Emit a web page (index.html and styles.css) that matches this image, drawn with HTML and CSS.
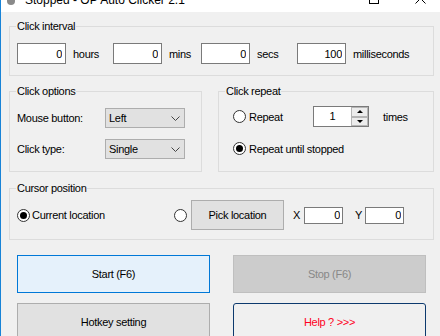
FILE: index.html
```html
<!DOCTYPE html>
<html lang="en">
  <head>
    <meta charset="UTF-8" />
    <meta name="viewport" content="width=device-width, initial-scale=1.0" />
    <title>Stopped - OP Auto Clicker 2.1</title>
    <link rel="stylesheet" href="styles.css">
  </head>
  <body>
    <div class="window">
      <div class="titlebar">
        <span class="app-icon"></span>
        <span class="title">Stopped - OP Auto Clicker 2.1</span>
        <span class="max-btn"></span>
        <svg class="close-btn" width="11" height="11" viewBox="0 0 11 11">
          <path d="M0.5 0.5 L10.5 10.5 M10.5 0.5 L0.5 10.5" stroke="#000" stroke-width="1" fill="none" />
        </svg>
      </div>

      <div class="content">
        <fieldset class="group interval">
          <legend>Click interval</legend>
          <div class="interval-row">
            <input class="num" type="text" value="0" readonly />
            <span class="unit hours">hours</span>
            <input class="num" type="text" value="0" readonly />
            <span class="unit mins">mins</span>
            <input class="num" type="text" value="0" readonly />
            <span class="unit secs">secs</span>
            <input class="num" type="text" value="100" readonly />
            <span class="unit">milliseconds</span>
          </div>
        </fieldset>

        <div class="options-row">
          <fieldset class="group options">
            <legend>Click options</legend>
            <div class="options-body">
              <div class="field-row">
                <span class="field-label">Mouse button:</span>
                <div class="select">
                  <span>Left</span>
                  <svg width="9" height="5" viewBox="0 0 9 5"><path d="M0.5 0.5 L4.5 4.5 L8.5 0.5" stroke="#444" fill="none" /></svg>
                </div>
              </div>
              <div class="field-row">
                <span class="field-label">Click type:</span>
                <div class="select">
                  <span>Single</span>
                  <svg width="9" height="5" viewBox="0 0 9 5"><path d="M0.5 0.5 L4.5 4.5 L8.5 0.5" stroke="#444" fill="none" /></svg>
                </div>
              </div>
            </div>
          </fieldset>

          <fieldset class="group repeat">
            <legend>Click repeat</legend>
            <div class="repeat-body">
              <div class="radio-row">
                <span class="radio"></span>
                <span class="radio-label repeat-label">Repeat</span>
                <div class="spinner">
                  <span class="spin-value">1</span>
                  <div class="spin-buttons">
                    <span class="spin-btn"><i class="tri-up"></i></span>
                    <span class="spin-btn"><i class="tri-down"></i></span>
                  </div>
                </div>
                <span class="times">times</span>
              </div>
              <div class="radio-row">
                <span class="radio checked"></span>
                <span class="radio-label">Repeat until stopped</span>
              </div>
            </div>
          </fieldset>
        </div>

        <fieldset class="group cursor">
          <legend>Cursor position</legend>
          <div class="cursor-row">
            <span class="radio checked"></span>
            <span class="radio-label current-label">Current location</span>
            <span class="radio"></span>
            <button class="pick">Pick location</button>
            <span class="coord-label">X</span>
            <input class="coord" type="text" value="0" readonly />
            <span class="coord-label y">Y</span>
            <input class="coord" type="text" value="0" readonly />
          </div>
        </fieldset>

        <div class="actions">
          <button class="big start">Start (F6)</button>
          <button class="big stop" disabled>Stop (F6)</button>
          <button class="big hotkey">Hotkey setting</button>
          <button class="big help">Help ? &gt;&gt;&gt;</button>
        </div>
      </div>
    </div>
  </body>
</html>
```

FILE: styles.css
```css
* {
  box-sizing: border-box;
}
body {
  margin: 0;
  background-color: #f0f0f0;
  font-family: "Liberation Sans", Arial, sans-serif;
  font-size: 11px;
  letter-spacing: -0.3px;
  color: #000;
}
.window {
  border-left: 1px solid #1883d7;
  height: 336px;
  overflow: hidden;
}
.titlebar {
  height: 12px;
  background: #fff;
  display: flex;
  align-items: flex-start;
  overflow: hidden;
}
.app-icon {
  flex: none;
  width: 8px;
  height: 8px;
  border-radius: 50%;
  background: #8a8a8a;
  margin: -3px 0 0 6px;
}
.title {
  margin: -6px 0 0 10px;
  font-size: 12px;
  letter-spacing: 0;
  line-height: 12px;
  white-space: nowrap;
}
.max-btn {
  flex: none;
  width: 10px;
  height: 10px;
  border: 1px solid #000;
  margin: -6px 0 0 auto;
}
.close-btn {
  flex: none;
  margin: -7px 14px 0 36px;
}
.content {
  padding: 0 0 0 8px;
}

/* group boxes */
.group {
  margin: 0;
  padding: 0;
  border: 1px solid #dcdcdc;
  min-width: 0;
}
.group legend {
  margin-left: 6px;
  padding: 0 1px;
  line-height: 13px;
}
.interval {
  width: 425px;
  margin-top: 8px;
}
.interval-row {
  display: flex;
  align-items: center;
  padding: 10px 0 11px 7px;
}
input.num,
input.coord {
  font-family: inherit;
  font-size: 11px;
  letter-spacing: inherit;
  color: #000;
  background: #fff;
  border: 1px solid #7a7a7a;
  text-align: right;
  outline: none;
  margin: 0;
}
input.num {
  width: 49px;
  height: 21px;
  padding: 0 3px;
}
.unit {
  margin-left: 7px;
}
.unit.hours,
.unit.secs {
  width: 40px;
}
.unit.mins {
  width: 32px;
}

.options-row {
  display: flex;
  gap: 16px;
  margin-top: 9px;
  width: 425px;
}
.options {
  width: 193px;
}
.options-body {
  padding: 10px 0 12px 7px;
}
.field-row {
  display: flex;
  align-items: center;
}
.field-row + .field-row {
  margin-top: 11px;
}
.field-label {
  width: 88px;
}
.select {
  width: 80px;
  height: 20px;
  background: #e1e1e1;
  border: 1px solid #adadad;
  display: flex;
  align-items: center;
  justify-content: space-between;
  padding: 0 3px 0 3px;
}
.select svg {
  margin-right: 1px;
}

.repeat {
  width: 216px;
}
.repeat-body {
  padding: 8px 0 0 14px;
}
.radio-row {
  display: flex;
  align-items: center;
  height: 21px;
}
.radio-row + .radio-row {
  margin-top: 11px;
}
.radio {
  flex: none;
  width: 13px;
  height: 13px;
  border: 1px solid #333;
  border-radius: 50%;
  background: #fff;
  display: flex;
  align-items: center;
  justify-content: center;
}
.radio.checked::after {
  content: "";
  width: 7px;
  height: 7px;
  border-radius: 50%;
  background: #000;
}
.radio-label {
  margin-left: 3px;
}
.repeat-label {
  width: 64px;
}
.spinner {
  width: 56px;
  height: 21px;
  border: 1px solid #7a7a7a;
  background: #fff;
  display: flex;
}
.spin-value {
  flex: 1;
  text-align: center;
  line-height: 19px;
}
.spin-buttons {
  width: 17px;
  display: flex;
  flex-direction: column;
}
.spin-btn {
  flex: 1;
  background: #ececec;
  border: 1px solid #b5b5b5;
  display: flex;
  align-items: center;
  justify-content: center;
}
.tri-up,
.tri-down {
  width: 0;
  height: 0;
  border-left: 3px solid transparent;
  border-right: 3px solid transparent;
}
.tri-up {
  border-bottom: 3px solid #000;
}
.tri-down {
  border-top: 3px solid #000;
}
.times {
  margin-left: 14px;
}

.cursor {
  width: 425px;
  margin-top: 10px;
}
.cursor-row {
  display: flex;
  align-items: center;
  padding: 5px 0 9px 7px;
}
.current-label {
  width: 142px;
  margin-left: 2px;
}
.pick {
  width: 93px;
  height: 30px;
  margin-left: 4px;
  background: #e1e1e1;
  border: 1px solid #adadad;
  font-family: inherit;
  font-size: 11px;
  letter-spacing: inherit;
  color: #000;
  padding: 0;
}
.coord-label {
  margin: 0 4px 0 9px;
}
.coord-label.y {
  margin: 0 3px 0 12px;
}
input.coord {
  width: 39px;
  height: 17px;
  padding: 0 2px;
}

.actions {
  display: grid;
  grid-template-columns: 193px 193px;
  column-gap: 23px;
  row-gap: 10px;
  margin: 15px 0 0 8px;
}
.big {
  height: 38px;
  font-family: inherit;
  font-size: 11px;
  letter-spacing: inherit;
  padding: 0;
  color: #000;
}
.start {
  background: #e5f1fb;
  border: 1px solid #0078d7;
}
.stop {
  background: #cccccc;
  border: 1px solid #bfbfbf;
  color: #888;
}
.hotkey {
  background: #e1e1e1;
  border: 1px solid #adadad;
}
.help {
  background: #f0f0f0;
  border: 1px solid #0d3a6e;
  border-radius: 3px;
  color: #ff0022;
}
```
